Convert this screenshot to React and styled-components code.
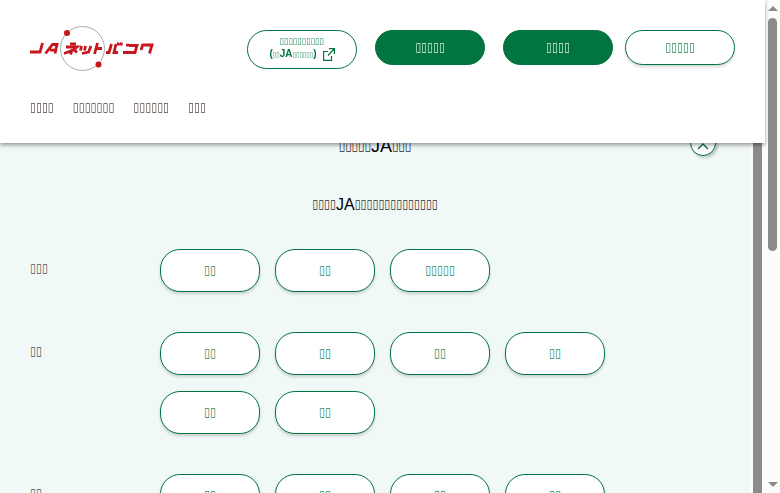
import styled, { createGlobalStyle } from "styled-components";

const GlobalStyle = createGlobalStyle`
    *{
        box-sizing: border-box;
    }
    body{
        margin: 0;
        overflow: hidden;
        background-color: #f1f8f8;
        color: #333;
        font-family: "Liberation Sans", Arial, sans-serif;
        font-size: 16px;
    }
`

const Page = styled.div`
    display: grid;
    grid-template-columns: 1fr 15px 15px;
    height: 100vh;
    overflow: hidden;
`
const Header = styled.header`
    position: fixed;
    top: 0;
    left: 0;
    right: 15px;
    z-index: 2;
    background-color: white;
    padding: 25px 30px;
    box-shadow: 0 2px 4px rgba(0, 0, 0, 0.4);
`
const HeaderTop = styled.div`
    display: flex;
    justify-content: space-between;
    align-items: flex-start;
`
const LogoLink = styled.a`
    display: block;
    line-height: 0;
`
const HeaderButtons = styled.div`
    display: flex;
    align-items: flex-start;
    gap: 18px;
    padding-top: 5px;
`
const ButtonPair = styled.div`
    display: flex;
    gap: 12px;
`
const HeaderButton = styled.button`
    width: 110px;
    height: 35px;
    padding: 0;
    border: 1px solid #00753f;
    border-radius: 20px;
    font-family: inherit;
    font-size: 16px;
    cursor: pointer;
    color: ${props => props.$filled ? "white" : "#00753f"};
    background-color: ${props => props.$filled ? "#00753f" : "white"};
    box-shadow: ${props => props.$filled ? "none" : "0 2px 3px rgba(0, 0, 0, 0.16)"};
`
const OpenLink = styled.a`
    display: flex;
    flex-direction: column;
    align-items: center;
    justify-content: center;
    width: 110px;
    height: 39px;
    border: 1px solid #00753f;
    border-radius: 20px;
    color: #00753f;
    font-size: 10px;
    line-height: 16px;
    text-decoration: none;
    white-space: nowrap;
    b{
        display: flex;
        align-items: center;
        gap: 6px;
        height: 16px;
    }
`
const Nav = styled.nav`
    display: flex;
    gap: 19px;
    padding-top: 27px;
    a{
        color: #332020;
        line-height: 20px;
        text-decoration: none;
    }
`
const Main = styled.main`
    padding: 134px 30px 0;
    overflow: hidden;
`
const TitleRow = styled.div`
    display: grid;
    grid-template-columns: 30px 1fr 30px;
    align-items: center;
    height: 24px;
    h2{
        grid-column: 2;
        margin: 0;
        color: black;
        font-size: 18px;
        font-weight: 400;
        line-height: 24px;
        text-align: center;
    }
`
const CloseButton = styled.button`
    display: grid;
    place-items: center;
    width: 26px;
    height: 26px;
    margin-top: -6px;
    padding: 6px 0 0;
    border: 1px solid #00753f;
    border-radius: 50%;
    background-color: white;
    color: #00753f;
    box-shadow: 2px 2px 3px rgba(0, 0, 0, 0.2);
    cursor: pointer;
`
const Lead = styled.p`
    margin: 0;
    padding: 35px 0 32px;
    color: black;
    line-height: 24px;
    text-align: center;
`
const Area = styled.section`
    display: grid;
    grid-template-columns: 130px 1fr;
    padding-bottom: 40px;
    h3{
        margin: 0;
        font-size: 16px;
        font-weight: 400;
        line-height: 40px;
    }
`
const Prefectures = styled.div`
    display: flex;
    flex-wrap: wrap;
    gap: 16px 15px;
    max-width: 460px;
`
const PrefectureButton = styled.button`
    width: 100px;
    height: 43px;
    padding: 0;
    border: 1px solid #00753f;
    border-radius: 20px;
    background-color: white;
    color: #00753f;
    font-family: inherit;
    font-size: 16px;
    cursor: pointer;
    box-shadow: 0 2px 3px rgba(0, 0, 0, 0.16);
`
const Boxes = styled.span`
    font-family: "DejaVu Sans Condensed", "DejaVu Sans", sans-serif;
    font-size: ${props => props.$size || 12}px;
    font-weight: 400;
    line-height: 1;
    vertical-align: ${props => props.$size < 10 ? "0" : "2px"};
    opacity: 0.85;
`
const Track = styled.div`
    display: flex;
    flex-direction: column;
    align-items: center;
    padding: ${props => props.$arrows ? "6px 0" : "0"};
    background-color: #fcfcfc;
`
const Rail = styled.div`
    display: grid;
    grid-template-rows: ${props => props.$rows};
    flex: 1;
    width: 9px;
    padding: ${props => props.$inset ? "7px 0" : "0"};
`
const Thumb = styled.div`
    border-radius: ${props => props.$round ? "5px" : "0"};
    background-color: #8b8b8b;
`
const Arrow = styled.i`
    border: 5px solid transparent;
    border-top: ${props => props.$up ? "0" : "5px solid #8b8b8b"};
    border-bottom: ${props => props.$up ? "5px solid #8b8b8b" : "0"};
`

const box = (count, size) => <Boxes $size={size}>{"▯".repeat(count)}</Boxes>;

const areas = [
  { name: 3, items: [2, 2, 5] },
  { name: 2, items: [2, 2, 2, 2, 2, 2] },
  { name: 2, items: [2, 2, 2, 2] },
];

const Logo = () => (
  <svg width="125" height="46" viewBox="0 0 125 46" fill="none" role="img" aria-label="JA">
    <circle cx="52.5" cy="23.5" r="22" stroke="#aaa" />
    <circle cx="37" cy="8" r="3" fill="#c7161d" />
    <circle cx="68.5" cy="39.5" r="3" fill="#c7161d" />
    <g stroke="#c7161d" strokeWidth="2.8">
      <path d="M12.500 18L10 27H0M15.500 28.500L22.500 19.500H27L25 28.500M20 25.200H26" />
      <path d="M40 18.800H46M36 22H47L43.500 25L34 28.500M42 24.500L40.500 29.500M43.500 24L47 27.500" />
      <path d="M51.500 21L50.500 25.500M55.500 21L54.500 25.500M61 21L58.500 27L52 28.500M67.500 18L64.500 29M66 23.500H72" />
      <path d="M81.500 19L79 27.500H76M86 19L84 27.500H88M88.500 17.500L88 20.500M91.500 17.500L91 20.500" />
      <path d="M96 20.200H99M99 20.500H107L105 27.500H93M113 19L111 25M112.500 20H122L119.500 28.500" />
    </g>
  </svg>
)

const App = () => {
  return (
    <Page>
      <GlobalStyle />
      <Header>
        <HeaderTop>
          <LogoLink href="#"><Logo /></LogoLink>
          <HeaderButtons>
            <OpenLink href="#">
              {box(10, 9)}
              <b>
                <span>({box(2, 7)}JA{box(6, 7)})</span>
                <svg width="12" height="13" viewBox="0 0 12 13" fill="none" stroke="currentColor" strokeWidth="1.2">
                  <path d="M5 3.500H.6V12.400H8.500V8M6 .6H11.400V6M11.400 .6L5 7.500" />
                </svg>
              </b>
            </OpenLink>
            <HeaderButton $filled>{box(5)}</HeaderButton>
            <ButtonPair>
              <HeaderButton $filled>{box(4)}</HeaderButton>
              <HeaderButton>{box(5)}</HeaderButton>
            </ButtonPair>
          </HeaderButtons>
        </HeaderTop>
        <Nav>
          {[4, 7, 6, 3].map(count => <a href="#" key={count}>{box(count)}</a>)}
        </Nav>
      </Header>
      <Main>
        <TitleRow>
          <h2>{box(5, 13)}JA{box(3, 13)}</h2>
          <CloseButton aria-label="close">
            <svg width="12" height="7" viewBox="0 0 12 7" fill="none" stroke="currentColor" strokeWidth="1.3">
              <path d="M1 6L6 1L11 6" />
            </svg>
          </CloseButton>
        </TitleRow>
        <Lead>{box(4)}JA{box(14)}</Lead>
        {areas.map((area, index) => (
          <Area key={index}>
            <h3>{box(area.name)}</h3>
            <Prefectures>
              {area.items.map((count, i) => <PrefectureButton key={i}>{box(count)}</PrefectureButton>)}
            </Prefectures>
          </Area>
        ))}
      </Main>
      <Track>
        <Rail $rows="1fr">
          <Thumb />
        </Rail>
      </Track>
      <Track $arrows>
        <Arrow $up />
        <Rail $rows="233fr 224fr" $inset>
          <Thumb $round />
        </Rail>
        <Arrow />
      </Track>
    </Page>
  )
}

export default App
